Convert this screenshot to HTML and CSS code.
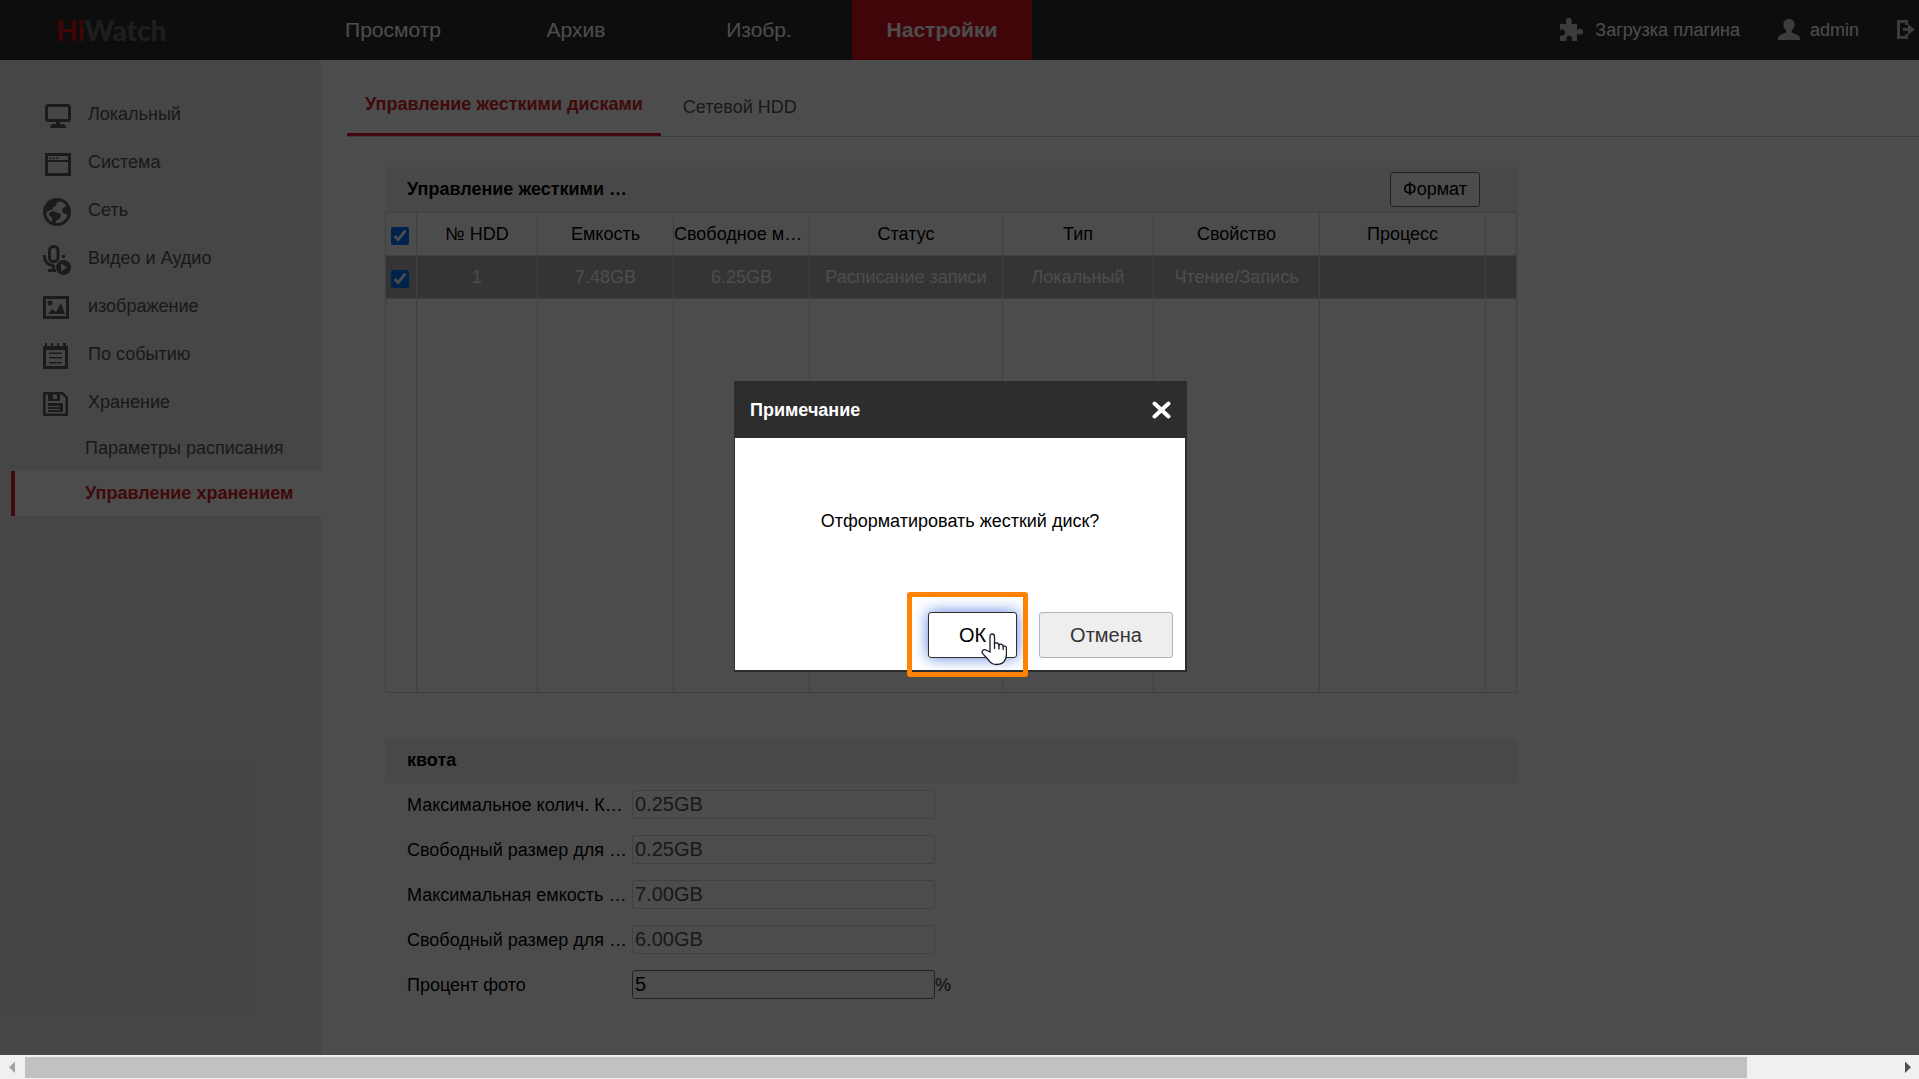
FILE: index.html
```
<!DOCTYPE html>
<html lang="ru">
<head>
<meta charset="utf-8">
<title>HiWatch – Управление хранением</title>
<link rel="stylesheet" href="styles.css">
</head>
<body>
<div class="page">
  <header class="topbar">
    <div class="logo"><span class="logo-hi">Hi</span>Watch</div>
    <nav class="nav">
      <a href="#">Просмотр</a>
      <a href="#">Архив</a>
      <a href="#">Изобр.</a>
      <a href="#" class="nav-active">Настройки</a>
    </nav>
    <div class="tools">
      <a href="#" class="tool tool-plugin">
        <svg width="23" height="24" viewBox="0 0 23 24"><path d="M0 6h6.200V4.500C5 2 6.500 0 8.800 0s3.700 2 2.700 4.200V6H17v6c1-.2 1.500-1.200 3-1.200 2 0 3 1.200 3 3s-1 3-3 3c-1.500 0-2-1.200-3-1.200V23h-5v-2c.6-2-.8-3.300-2.700-3.300S6 19 6.500 21v2H0v-5.500c3 .8 5-.4 5-3s-2-3.500-5-2.700z"/></svg>
        <span>Загрузка плагина</span>
      </a>
      <a href="#" class="tool tool-user">
        <svg width="22" height="22" viewBox="0 0 22 22"><path d="M11 0c3.500 0 5.600 2.300 5.600 5.500 0 2.500-1.300 4.500-2.800 6v1.800c1 1.500 8.200 2.200 8.200 5.700v2H0v-2c0-3.500 7.200-4.200 8.200-5.700v-1.800c-1.500-1.500-2.800-3.500-2.800-6C5.400 2.300 7.500 0 11 0z"/></svg>
        <span>admin</span>
      </a>
      <a href="#" class="tool" aria-label="Выход">
        <svg width="18" height="20" viewBox="0 0 18 20"><path d="M0 0h11v5H8V3H3v13h5v-2h3v5H0z"/><path d="M6 8h5V4l7 5.500-7 5.500v-4H6z"/></svg>
      </a>
    </div>
  </header>

  <div class="body">
    <aside class="sidebar">
      <a href="#" class="item">
        <svg class="ico" viewBox="0 -4 30 34"><rect x="3.500" y="4.500" width="23" height="15" rx="2" fill="none" stroke="#5d5d5d" stroke-width="3"/><path d="M13 20h4v3h4q2 1 2 4H7q0-3 2-4h4z"/></svg>Локальный</a>
      <a href="#" class="item">
        <svg class="ico" viewBox="0 -4 30 34"><path fill-rule="evenodd" d="M2 4h26v23H2zM5 7v4h20V7zM5 13v11h20V13z"/><path d="M6.500 8.500h2v1.500h-2zM10 8.500h2v1.500h-2zM13.500 8.500h2v1.500h-2z"/></svg>Система</a>
      <a href="#" class="item">
        <svg class="ico" viewBox="0 -4 30 34"><circle cx="14" cy="15" r="12.500" fill="none" stroke="#5d5d5d" stroke-width="3"/><path d="M4 7q4-5 11-5l1 3-3 1 1 2-4 2-1 3-4 1-2 3zM6 16l4-2 5 2 3 1-1 4-4 3-1 4-3-2 0-5-3-3zM19 12l4-3 4 2v9l-4-3-3-1z"/></svg>Сеть</a>
      <a href="#" class="item">
        <svg class="ico" viewBox="0 -4 30 34"><rect x="6.500" y="1.500" width="8.500" height="15" rx="4" fill="none" stroke="#5d5d5d" stroke-width="3"/><path d="M1.500 10v2q1 8 9 8.500M19 11.500h3M10.500 20v5M5 25.500h8" fill="none" stroke="#5d5d5d" stroke-width="3"/><circle cx="20.500" cy="22.500" r="7.500"/><path class="hole" d="M18 18.500l6 4-6 4z"/></svg>Видео и Аудио</a>
      <a href="#" class="item">
        <svg class="ico" viewBox="0 -4 30 34"><path fill-rule="evenodd" d="M0 3h26v23H0zM3 6v17h20V6z"/><circle cx="7" cy="10" r="2.500"/><path d="M5 21l4-5 4 3 5-9 4 11z"/></svg>изображение</a>
      <a href="#" class="item">
        <svg class="ico" viewBox="0 -4 30 34"><path fill-rule="evenodd" d="M0 5h2V2h2v3h4V2h2v3h4V2h2v3h4V2h3v3h2v23H0zM3 9v16h19V9z"/><path d="M6 11.500h13v1.500H6zM6 16h13v1.500H6zM6 21h13v1.500H6z"/></svg>По событию</a>
      <a href="#" class="item">
        <svg class="ico" viewBox="0 -4 30 34"><path fill-rule="evenodd" d="M0 3h20l5 5v19H0zM2.500 5.500v19h20V9L19 5.500h-2V12H5V5.500z"/><path class="hole" d="M10 5.500h4V10h-4z"/><path d="M5 14h15v9H5z"/><path class="hole" d="M5 17h12v1H5zM5 20h12v1H5z"/></svg>Хранение</a>
      <a href="#" class="sub">Параметры расписания</a>
      <a href="#" class="sub sub-active">Управление хранением</a>
    </aside>

    <main class="content">
      <nav class="tabs">
        <a href="#" class="tab tab-active">Управление жесткими дисками</a>
        <a href="#" class="tab">Сетевой HDD</a>
      </nav>

      <section class="panel">
        <div class="panel-head">
          <h2 class="cut">Управление жесткими дисками</h2>
          <button type="button" class="btn-format">Формат</button>
        </div>
        <table class="disks">
          <colgroup><col class="c-check"><col class="c-num"><col class="c-size"><col class="c-size"><col class="c-status"><col class="c-type"><col class="c-wide"><col class="c-wide"><col></colgroup>
          <thead>
            <tr><th><input type="checkbox" checked aria-label="Выбрать все"></th><th>№ HDD</th><th>Емкость</th><th>Свободное место</th><th>Статус</th><th>Тип</th><th>Свойство</th><th>Процесс</th><th></th></tr>
          </thead>
          <tbody>
            <tr class="selected"><td><input type="checkbox" checked aria-label="Диск 1"></td><td>1</td><td>7.48GB</td><td>6.25GB</td><td>Расписание записи</td><td>Локальный</td><td>Чтение/Запись</td><td></td><td></td></tr>
            <tr class="blank"><td></td><td></td><td></td><td></td><td></td><td></td><td></td><td></td><td></td></tr>
          </tbody>
        </table>
      </section>

      <section class="panel quota">
        <div class="panel-head"><h2>квота</h2></div>
        <div class="field"><label class="cut" for="q1">Максимальное колич. Картинок</label><input id="q1" type="text" value="0.25GB" disabled></div>
        <div class="field"><label class="cut" for="q2">Свободный размер для изображений</label><input id="q2" type="text" value="0.25GB" disabled></div>
        <div class="field"><label class="cut" for="q3">Максимальная емкость записи</label><input id="q3" type="text" value="7.00GB" disabled></div>
        <div class="field"><label class="cut" for="q4">Свободный размер для записи</label><input id="q4" type="text" value="6.00GB" disabled></div>
        <div class="field"><label class="cut" for="q5">Процент фото</label><input id="q5" type="text" value="5"><span>%</span></div>
      </section>
    </main>
  </div>

  <div class="backdrop">
    <div class="dialog" role="dialog" aria-labelledby="dlg-title">
      <div class="dialog-head">
        <h2 id="dlg-title">Примечание</h2>
        <button type="button" class="close" aria-label="Закрыть"><svg width="19" height="18" viewBox="0 0 19 18"><path d="M2.500 2.500l14 13M16.500 2.500l-14 13" stroke="#fff" stroke-width="4" stroke-linecap="round"/></svg></button>
      </div>
      <p class="message">Отформатировать жесткий диск?</p>
      <div class="actions">
        <div class="ok-wrap">
          <button type="button" class="btn ok">ОК</button>
          <span class="marker"></span>
          <svg class="cursor" width="26" height="33" viewBox="0 0 26 33"><path d="M9 19V3.500q0-2.500 2.200-2.500t2.300 2.500V11q.5-1.500 2.500-1t2 2q1-1.200 2.600-.7t1.600 1.900q1-.7 2.200 0t1.100 2.300V21q0 3-1.500 6-2 4.500-8.500 4.500-5 0-7.500-4L1.500 20.500Q.5 18.500 2 17.300t3.500 0z" fill="#fff" stroke="#1b1b2a" stroke-width="1.300"/><path d="M13.500 10v6M18 11v5.500M22.200 13v4" fill="none" stroke="#1b1b2a" stroke-width="1.300"/></svg>
        </div>
        <button type="button" class="btn cancel">Отмена</button>
      </div>
    </div>
  </div>
</div>
<div class="hscroll">
  <svg width="25" height="24" viewBox="0 0 25 24"><path d="M15 6.500v11.500L9 12.300z" fill="#a3a3a3"/></svg>
  <div class="track"><div class="thumb"></div></div>
  <svg width="25" height="24" viewBox="0 0 25 24"><path d="M11 6.500v11.500l6-5.700z" fill="#505050"/></svg>
</div>
</body>
</html>
```
FILE: styles.css
```
* { box-sizing: border-box; }
body {
  margin: 0;
  height: 100vh;
  display: flex;
  flex-direction: column;
  overflow: hidden;
  background: #fff;
  color: #000;
  font: 18px/24px "Liberation Sans", Arial, sans-serif;
}
a { color: inherit; text-decoration: none; }
h2, p { margin: 0; font-size: inherit; }
button, input { font-family: inherit; margin: 0; }
svg { flex: none; display: block; }

.page { position: relative; flex: 1; min-height: 0; display: flex; flex-direction: column; overflow: hidden; }

/* top bar */
.topbar { flex: none; height: 60px; display: flex; align-items: center; background: #2d2d2d; color: #fff; }
.logo { width: 303px; padding-left: 56px; font: 900 28px/40px Lato, sans-serif; color: #666; }
.logo-hi { color: #d51111; }
.nav { display: flex; gap: 3px; }
.nav a { width: 180px; line-height: 60px; text-align: center; font-size: 21px; }
.nav .nav-active { background: #d51121; font-weight: bold; }
.tools { margin-left: auto; padding-right: 4px; display: flex; align-items: center; fill: #c8c8c8; }
.tool { display: flex; align-items: center; }
.tool-plugin { gap: 12px; margin-right: 38px; }
.tool-user { gap: 10px; margin-right: 38px; }

/* side menu */
.body { flex: 1; min-height: 0; display: flex; }
.sidebar { flex: none; width: 321px; padding-top: 30px; background: #e9e9e9; color: #555; }
.item { display: flex; align-items: center; gap: 15px; height: 48px; padding-left: 43px; }
.ico { width: 30px; height: 34px; fill: #5d5d5d; }
.hole { fill: #e9e9e9; }
.sub { display: block; margin-left: 11px; padding-left: 70px; border-left: 4px solid transparent; line-height: 45px; white-space: nowrap; }
.sub-active { background: #fff; border-color: #d5212b; color: #d5212b; font-weight: bold; }

/* content */
.content { flex: 1; min-width: 0; padding-left: 26px; }
.tabs { display: flex; height: 77px; border-bottom: 1px solid #c8c8c8; color: #555; }
.tab { padding: 35px 22px 0; }
.tab-active { padding: 32px 18px 0; border-bottom: 3px solid #d5212b; color: #d5212b; font-weight: bold; }
.panel { width: 1132px; max-width: 100%; margin: 30px 0 0 38px; }
.quota { margin-top: 45px; }
.panel-head { display: flex; align-items: center; justify-content: space-between; height: 45px; padding: 0 37px 0 22px; background: #f0f0f0; }
.panel-head h2 { padding-bottom: 2px; }
.cut { width: 220px; overflow: hidden; white-space: nowrap; text-overflow: ellipsis; }
.btn-format { width: 90px; height: 35px; padding: 0; background: #fff; border: 1px solid #717171; border-radius: 3px; font-size: 18px; }

.disks { width: 100%; table-layout: fixed; border-collapse: collapse; }
.disks th, .disks td { height: 43px; padding: 0; border: 1px solid #d5d5d5; font-weight: normal; text-align: center; overflow: hidden; white-space: nowrap; text-overflow: ellipsis; }
.disks input { display: block; width: 18px; height: 18px; margin: 4px 0 0 5px; }
.disks .selected { background: #b0b0b0; color: #fff; }
.disks .blank td { height: 394px; }
.c-check { width: 31px; }
.c-num { width: 121px; }
.c-size { width: 136px; }
.c-status { width: 193px; }
.c-type { width: 151px; }
.c-wide { width: 166px; }

.field { display: flex; align-items: center; height: 45px; padding: 0 0 2px 22px; }
.field input { width: 303px; height: 29px; margin-left: 5px; padding: 0 2px; border: 1px solid #717171; border-radius: 3px; background: #fff; color: #000; font-size: 20px; }
.field input:disabled { border-color: #d5d5d5; color: #555; }
.field span { color: #333; }

/* modal */
.backdrop { position: absolute; inset: 0; display: flex; align-items: center; justify-content: center; padding: 0 0 2px 2px; background: rgba(0, 0, 0, .7); }
.dialog { display: flex; flex-direction: column; width: 453px; height: 291px; background: #fff; border: solid #2d2d2d; border-width: 0 2px 2px 1px; }
.dialog-head { display: flex; align-items: center; justify-content: space-between; height: 57px; padding: 0 14px 0 15px; background: #2d2d2d; color: #fff; }
.close { padding: 0; border: 0; background: none; }
.message { flex: 1; padding-top: 71px; text-align: center; }
.actions { display: flex; justify-content: flex-end; gap: 22px; padding: 0 12px 12px 0; }
.btn { height: 46px; padding: 0; border-radius: 3px; font-size: 20px; }
.ok-wrap { position: relative; }
.ok { width: 89px; background: #fff; border: 1px solid #2d2d2d; box-shadow: 0 0 15px #5a80dc; }
.cancel { width: 134px; background: #eee; border: 1px solid #b4b4b4; color: #333; }
.marker { position: absolute; left: -21px; top: -20px; width: 121px; height: 85px; border: 5px solid #ff8200; border-radius: 3px; }
.cursor { position: absolute; left: 53px; top: 21px; }

/* horizontal scroll bar */
.hscroll { flex: none; display: flex; height: 24px; background: #f0f0f0; }
.track { flex: 1; display: flex; padding: 2px 147px 1px 0; }
.thumb { flex: 1; background: #c1c1c1; }
```
